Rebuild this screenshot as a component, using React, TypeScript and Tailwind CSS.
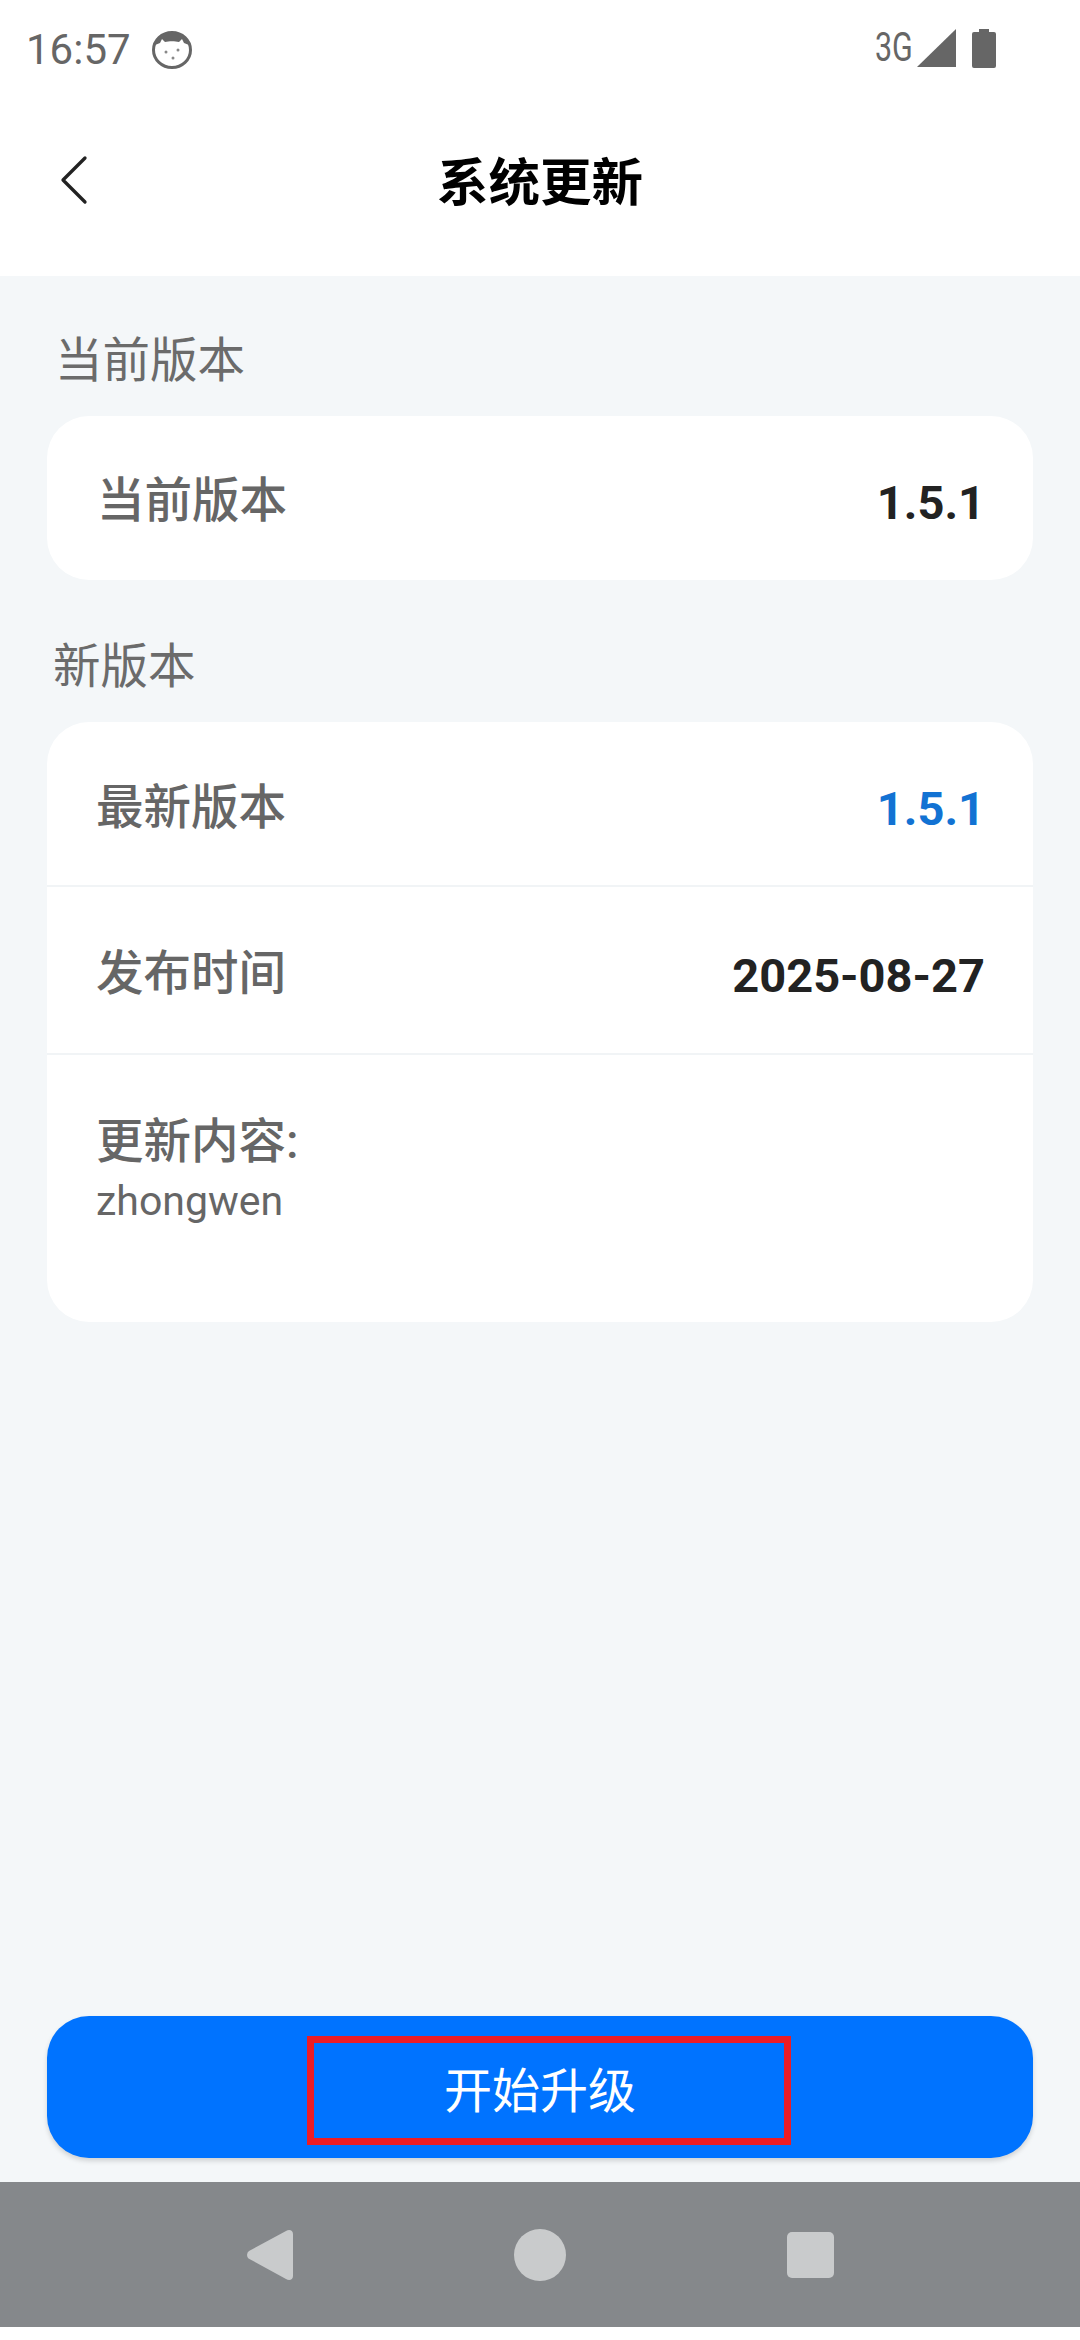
import React from "react";
import { ChevronLeft } from "lucide-react";

const font = "font-['Roboto','Noto_Sans_CJK_SC',sans-serif]";

function Row({ label, value, valueClass, height }: { label: string; value: string; valueClass: string; height: string }) {
  return (
    <div className={`flex items-center justify-between pt-[10px] pl-[49px] pr-[48px] border-b-2 border-[#f1f4f6] ${height}`}>
      <span className="text-[47.5px] leading-none font-[550] text-[#666666]">{label}</span>
      <span className={`text-[47px] leading-none font-bold ${valueClass}`}>{value}</span>
    </div>
  );
}

export default function App() {
  return (
    <div className={`w-[1080px] h-[2340px] flex flex-col bg-white ${font}`}>
      {/* Status bar */}
      <div className="h-[96px] flex items-center justify-between pl-[26px] pr-[84px] text-[#666666]">
        <div className="flex items-center gap-[21px] mt-[3px]">
          <span className="text-[42px] leading-none">16:57</span>
          <svg className="w-[40px] h-[38px]" viewBox="0 0 40 38">
            <ellipse cx="20" cy="19" rx="18.5" ry="17.5" fill="none" stroke="#666666" strokeWidth="3" />
            <path d="M3 14C6 5 12 1 20 1s14 4 17 13l-5-2-2-4-3 3c-4-1-10-1-14 0l-3-3-2 4z" fill="#666666" />
            <circle cx="14" cy="21" r="1.5" fill="#888888" />
            <circle cx="26" cy="19" r="1.5" fill="#888888" />
            <circle cx="21" cy="27" r="1.5" fill="#888888" />
          </svg>
        </div>
        <div className="flex items-center">
          <span className="text-[40px] leading-none w-[40px] scale-x-[0.76] origin-left whitespace-nowrap">3G</span>
          <svg className="w-[40px] h-[38px] ml-[2px]" viewBox="0 0 40 38">
            <path d="M0 38 39 0v38z" fill="#666666" />
          </svg>
          <svg className="w-[24px] h-[39px] ml-[15px]" viewBox="0 0 24 39">
            <path d="M7 0h10v3h5a2 2 0 0 1 2 2v32a2 2 0 0 1-2 2H2a2 2 0 0 1-2-2V5a2 2 0 0 1 2-2h5z" fill="#666666" />
          </svg>
        </div>
      </div>

      {/* Title bar */}
      <div className="h-[180px] relative flex items-center justify-center pb-[5px]">
        <ChevronLeft className="absolute left-[30px] top-[40px] w-[88px] h-[88px] text-[#222222]" strokeWidth={0.9} />
        <h1 className="text-[51.5px] leading-none font-bold text-black">系统更新</h1>
      </div>

      {/* Content */}
      <main className="flex-1 bg-[#f4f7f9] px-[47px] flex flex-col">
        <p className="mt-[62px] ml-[8px] text-[47.5px] leading-[46px] text-[#6b6b6b]">当前版本</p>
        <section className="mt-[32px] bg-white rounded-[42px] h-[164px]">
          <div className="flex items-center justify-between h-full pt-[8px] pl-[50px] pr-[48px]">
            <span className="text-[47.5px] leading-none font-[550] text-[#666666]">当前版本</span>
            <span className="text-[47px] leading-none font-bold text-[#222222]">1.5.1</span>
          </div>
        </section>

        <p className="mt-[64px] ml-[6px] text-[47.5px] leading-[46px] text-[#6b6b6b]">新版本</p>
        <section className="mt-[32px] bg-white rounded-[42px] h-[600px] overflow-hidden">
          <Row label="最新版本" value="1.5.1" valueClass="text-[#1272d3]" height="h-[165px]" />
          <Row label="发布时间" value="2025-08-27" valueClass="text-[#222222]" height="h-[168px]" />
          <div className="pl-[49px] pt-[64px]">
            <p className="text-[47.5px] leading-none font-[550] text-[#666666]">更新内容:</p>
            <p className="mt-[14px] text-[41px] leading-none text-[#666666]">zhongwen</p>
          </div>
        </section>

        <button className="relative mt-auto mb-[24px] h-[142px] rounded-[42px] bg-[#0073ff] shadow-[0_3px_5px_rgba(0,0,0,0.15)] flex items-center justify-center">
          <span className="mt-[10px] text-[48px] leading-none text-white">开始升级</span>
          {/* red annotation box, off-centre in the picture */}
          <span className="absolute left-[260px] top-[20px] w-[484px] h-[109px] border-[7px] border-[#ed1c24]" />
        </button>
      </main>

      {/* Navigation bar */}
      <div className="h-[145px] bg-[#85888b] flex items-center justify-center gap-[221px] mb-[13px]">
        <svg className="w-[46px] h-[52px]" viewBox="0 0 46 52">
          <path d="M39 2 2 22a5 5 0 0 0-.5 7.500L39 50c3 2 7 1 7-3V5c0-4-4-5-7-3z" fill="#c9cbcc" />
        </svg>
        <div className="w-[52px] h-[52px] rounded-full bg-[#c9cbcc]" />
        <div className="w-[47px] h-[46px] rounded-[5px] bg-[#c9cbcc]" />
      </div>
    </div>
  );
}
